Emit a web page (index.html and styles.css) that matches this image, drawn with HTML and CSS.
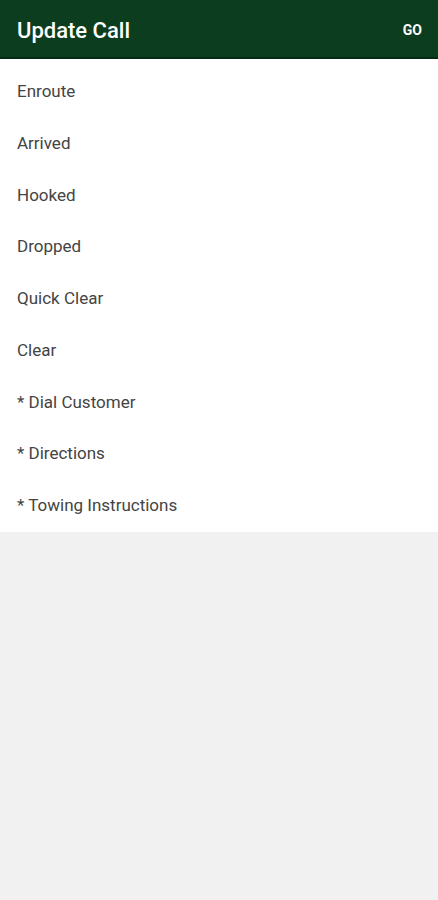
FILE: index.html
```html
<!DOCTYPE html>
<html>

<head>
    <meta name="viewport" content="width=device-width, initial-scale=1">
    <link rel="stylesheet" href="styles.css">
</head>

<body>

<div class="header">
    <span class="title">Update Call</span>
    <span class="go">GO</span>
</div>

<ul class="list">
    <li>Enroute</li>
    <li>Arrived</li>
    <li>Hooked</li>
    <li>Dropped</li>
    <li>Quick Clear</li>
    <li>Clear</li>
    <li>* Dial Customer</li>
    <li>* Directions</li>
    <li>* Towing Instructions</li>
</ul>

</body>
</html>
```
FILE: styles.css
```css
body {
    margin: 0;
    background-color: #f1f1f1;
    font-family: Roboto, "Liberation Sans", sans-serif;
}

.header {
    height: 54px;
    background-color: #0b3d1e;
    border-bottom: 2px solid #072a14;
    box-shadow: 0 1px 1px rgba(0, 0, 0, 0.3);
    display: flex;
    align-items: center;
    justify-content: space-between;
    padding: 3px 16px 0 17px;
    color: #fff;
}

.title {
    font-size: 22px;
    font-weight: 500;
}

.go {
    font-size: 14px;
    font-weight: 700;
}

.list {
    list-style: none;
    margin: 0;
    padding: 7px 0 0 0;
    background-color: #fff;
}

.list li {
    height: 51.75px;
    line-height: 51.75px;
    padding-left: 17px;
    font-size: 17px;
    color: #444;
}
```
